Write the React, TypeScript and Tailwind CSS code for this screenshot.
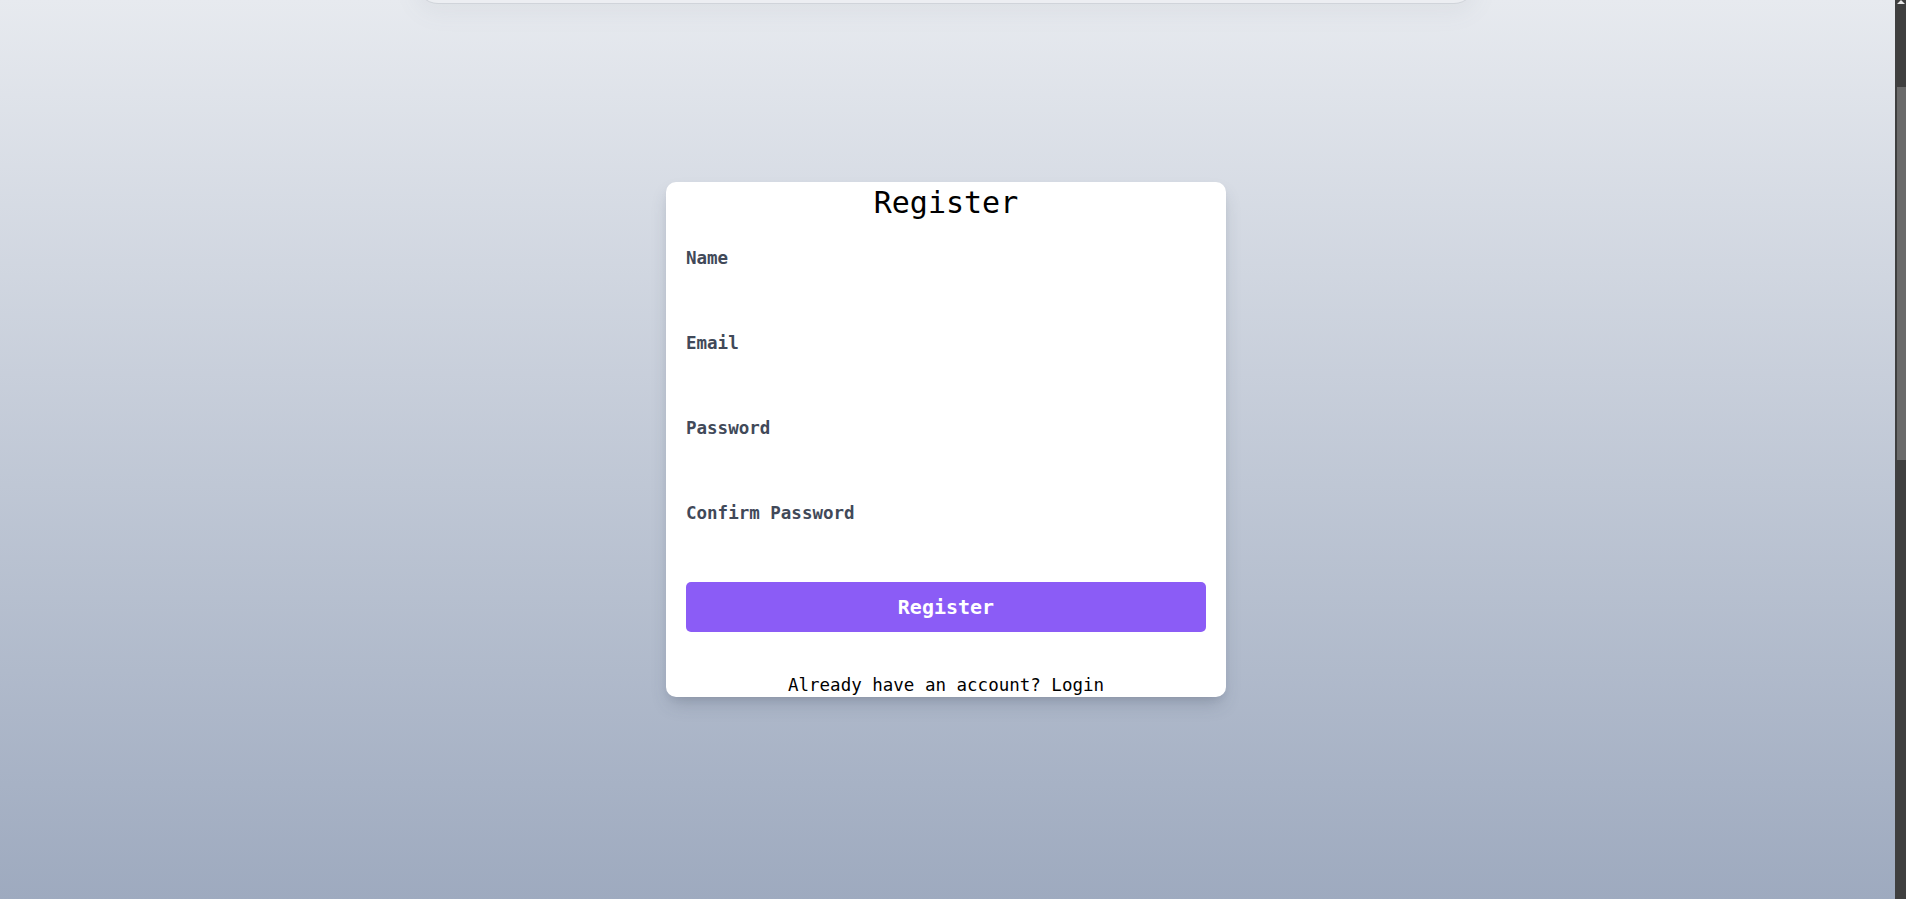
import React, { useEffect, useRef } from "react";

const mono = "font-['DejaVu_Sans_Mono','Liberation_Mono',monospace]";

function Field({ label, type }: { label: string; type: string }) {
  return (
    <div className="flex flex-col">
      <label className="block pt-[1px] text-[17.5px] leading-[25px] font-semibold text-[#414959]">{label}</label>
      <input type={type} className="h-[39px] w-full bg-transparent outline-none" />
    </div>
  );
}

function Scrollbar() {
  return (
    <div className="flex h-screen w-[11px] shrink-0 flex-col bg-[#3f3f3f]">
      <div className="flex h-[87px] justify-end">
        <svg width="8" height="6" viewBox="0 0 8 6" className="mt-0 mr-[1px]">
          <path d="M4 0 L8 4 L0 4 Z" fill="#e8e8e8" />
        </svg>
      </div>
      <div className="ml-[2px] h-[373px] bg-[#6a6a6a]" />
    </div>
  );
}

export default function App() {
  const ref = useRef<HTMLDivElement>(null);
  useEffect(() => {
    if (ref.current) ref.current.scrollTop = 173;
  }, []);
  return (
    <div className={`flex h-screen w-full ${mono}`}>
      <div
        ref={ref}
        className="h-screen flex-1 overflow-y-scroll [scrollbar-width:none] bg-gradient-to-b from-[#e7eaef] to-[#9eaabf]"
      >
        <header className="flex h-[177px] items-end justify-center pr-[3px]">
          <nav className="h-[80px] w-[1060px] rounded-[22px] border border-[#d0d4da] bg-[#eceef2] shadow-[0_8px_24px_rgba(100,110,130,0.08)]" />
        </header>
        <main className="flex h-[899px] justify-center pt-[178px] pr-[3px]">
          <div className="h-fit w-[560px] rounded-[10px] bg-white px-5 shadow-[0_10px_18px_-4px_rgba(60,70,90,0.25),0_4px_8px_-4px_rgba(60,70,90,0.15)]">
            <h1 className="pt-[1px] text-center text-[30px] font-normal leading-[39px] text-black">Register</h1>
            <form className="mt-[23px] flex flex-col">
              <div className="flex flex-col gap-5">
                <Field label="Name" type="text" />
                <Field label="Email" type="email" />
                <Field label="Password" type="password" />
                <Field label="Confirm Password" type="password" />
              </div>
              <button
                type="button"
                className="mt-[17px] h-[50px] w-full rounded-[5px] bg-[#8b5cf6] text-[20px] font-bold text-white"
              >
                Register
              </button>
              <p className="mt-10 pt-[1px] text-center text-[17.5px] leading-[24px] text-black">
                Already have an account? Login
              </p>
            </form>
          </div>
        </main>
        <div className="h-[1018px]" />
      </div>
      <Scrollbar />
    </div>
  );
}
